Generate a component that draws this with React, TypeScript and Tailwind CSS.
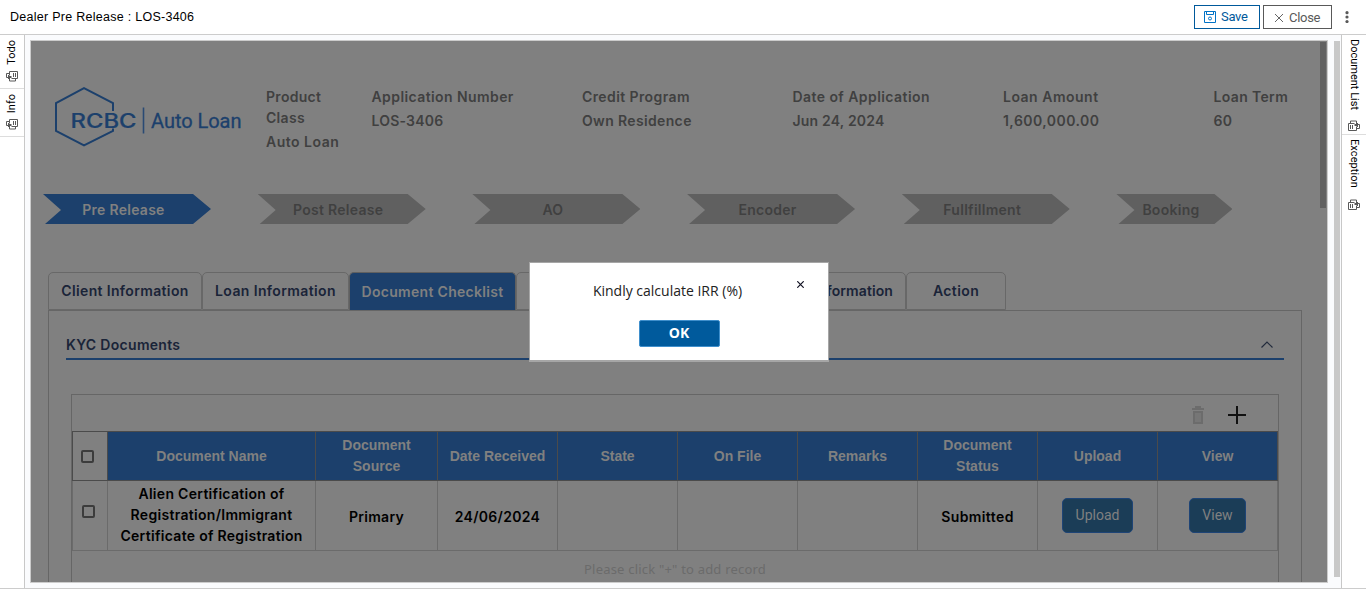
import type { ReactNode } from "react";

const fields = [
  { label: "Product Class", value: "Auto Loan", box: "w-[105.5px]", lt: "w-[73px] tracking-[0.3px]", vt: "tracking-[0.5px]" },
  { label: "Application Number", value: "LOS-3406", box: "w-[210.5px]", lt: "tracking-[0.41px]", vt: "tracking-[0.2px]" },
  { label: "Credit Program", value: "Own Residence", box: "w-[210.5px]", lt: "tracking-[0.4px]", vt: "tracking-[0.35px]" },
  { label: "Date of Application", value: "Jun 24, 2024", box: "w-[210.5px]", lt: "tracking-[0.43px]", vt: "tracking-[0.2px]" },
  { label: "Loan Amount", value: "1,600,000.00", box: "w-[210.5px]", lt: "tracking-[0.5px]", vt: "tracking-[0.45px]" },
  { label: "Loan Term", value: "60", box: "w-[100px]", lt: "tracking-[0.35px]", vt: "tracking-[0.4px]" },
];

const stages = ["Pre Release", "Post Release", "AO", "Encoder", "Fullfillment", "Booking"];

const tabs = [
  { name: "Client Information", box: "w-[154px] tracking-[0.35px]" },
  { name: "Loan Information", box: "w-[147px] tracking-[0.38px]" },
  { name: "Document Checklist", box: "w-[167px] tracking-[0.3px]" },
  { name: "", box: "w-[190px]" },
  { name: "Information", box: "w-[200px] justify-end pr-3 tracking-[0.1px]" },
  { name: "Action", box: "w-[100px] tracking-[0.4px]" },
];

const columns = ["Document Name", "Document Source", "Date Received", "State", "On File", "Remarks", "Document Status", "Upload", "View"];

function RailIcon({ flip = false }: { flip?: boolean }) {
  return (
    <svg width="12" height="11" viewBox="0 0 12 11" fill="none" stroke="#595959" className={flip ? "rotate-180" : ""}>
      <path d="M3.500 4.500v-4h8v7h-6" />
      <path d="M3 2.500H.5v4H2" />
      <path d="M3.500 8v2h6V7.500" />
      <path d="M7.500 2v4M9.500 2v4" />
      <path d="M2 8V4h1v1h2.500v2H4v1z" fill="#595959" stroke="none" />
    </svg>
  );
}

function Logo() {
  return (
    <svg width="190" height="62" viewBox="0 0 190 62" fill="none">
      <path d="M60 25V17L31 2.200 3 17v28L31 59.500 60 45v-2.500" stroke="#1c406c" strokeWidth="2" />
      <text x="17.500" y="41.800" fontFamily="Inter, sans-serif" fontSize="19.500" fontWeight="500" fill="#1c406c" stroke="#1c406c" strokeWidth=".2" textLength="66" lengthAdjust="spacingAndGlyphs">RCBC</text>
      <path d="M90.500 21.500v26" stroke="#2a4a74" strokeWidth="1.600" />
      <text x="98" y="42" fontFamily="Roboto, sans-serif" fontSize="20" fontWeight="400" fill="#1c406c" stroke="#1c406c" strokeWidth=".3" textLength="90.500" lengthAdjust="spacing">Auto Loan</text>
    </svg>
  );
}

function Th({ children }: { children?: ReactNode }) {
  return (
    <div className="flex items-center justify-center border-r border-[#4b4b4b] bg-[#1c406c] px-2 text-center font-['Liberation_Sans',sans-serif] text-[14px] font-bold leading-[21px] text-[#808080]">
      {children}
    </div>
  );
}

function Td({ children }: { children?: ReactNode }) {
  return (
    <div className="flex items-center justify-center border-r border-b border-[#6b6b6b] pt-[3px] text-center text-[14px] font-semibold leading-[21px] tracking-[0.3px] text-black">
      {children}
    </div>
  );
}

function Header() {
  return (
    <header className="flex h-[35px] shrink-0 items-center border-b border-[#ccc] bg-white pr-[17px] pl-[10px] font-['Liberation_Sans',sans-serif]">
      <h1 className="grow pb-px text-[12.500px] leading-4 tracking-[0.27px] text-black">Dealer Pre Release : LOS-3406</h1>
      <button className="flex h-6 w-[66px] items-center border border-[#00599b] pl-[9px] font-[Roboto,sans-serif] text-[13px] leading-4 tracking-[-0.3px] text-[#00599b]">
        <svg width="12" height="12" viewBox="0 0 12 12" fill="none" stroke="#0072c6" className="mr-[5px]">
          <path d="M.5.5h11v11H.5zM2.500.5v3h7v-3" />
          <circle cx="6" cy="7.500" r="1.500" />
        </svg>
        Save
      </button>
      <button className="ml-[3px] flex h-6 w-[69px] items-center border border-[#595959] pt-px pl-[11px] font-[Roboto,sans-serif] text-[13px] leading-4 tracking-[-0.3px] text-[#595959]">
        <svg width="8" height="8" viewBox="0 0 8 8" stroke="#555" strokeWidth=".9" className="mr-[6px]">
          <path d="M0 0l8 8M8 0L0 8" />
        </svg>
        Close
      </button>
      <svg width="4" height="12" viewBox="0 0 4 12" fill="#595959" className="ml-[13px]">
        <circle cx="2" cy="1.700" r="1.600" />
        <circle cx="2" cy="6" r="1.600" />
        <circle cx="2" cy="10.500" r="1.600" />
      </svg>
    </header>
  );
}

function LeftRail() {
  return (
    <nav className="flex w-[25px] shrink-0 flex-col border-r border-[#c8c8c8] bg-white font-[Roboto,sans-serif] text-[11px] leading-3 text-black">
      <div className="flex h-[54px] flex-col items-center justify-between border-b border-[#ddd] pt-[5px] pb-[6px]">
        <span className="rotate-180 [writing-mode:vertical-rl]">Todo</span>
        <RailIcon />
      </div>
      <div className="flex h-12 flex-col items-center justify-between border-b border-[#ddd] pt-[5px] pb-[6px]">
        <span className="rotate-180 [writing-mode:vertical-rl]">Info</span>
        <RailIcon />
      </div>
    </nav>
  );
}

function RightRail() {
  return (
    <nav className="flex w-[25px] shrink-0 flex-col border-l border-[#c8c8c8] bg-white font-[Roboto,sans-serif] text-[11px] leading-3 text-black">
      <div className="flex h-[100px] flex-col items-center justify-between border-b border-[#ddd] pt-1 pb-[3px]">
        <span className="[writing-mode:vertical-rl]">Document List</span>
        <RailIcon flip />
      </div>
      <div className="flex h-[75px] flex-col items-center justify-between pt-[4px]">
        <span className="tracking-[0.1px] [writing-mode:vertical-rl]">Exception</span>
        <RailIcon flip />
      </div>
    </nav>
  );
}

function Summary() {
  return (
    <section className="flex h-[153px] pt-[45px] pl-[22px]">
      <Logo />
      <dl className="flex pl-[23px] text-[14px] font-semibold leading-[21px] text-[#404040]">
        {fields.map((f) => (
          <div key={f.label} className={f.box + " shrink-0"}>
            <dt className={f.lt}>{f.label}</dt>
            <dd className={"mt-[3px] " + f.vt}>{f.value}</dd>
          </div>
        ))}
      </dl>
    </section>
  );
}

function Stages() {
  return (
    <ol className="flex h-[30px] shrink-0 pl-[12px] text-[14px] font-semibold tracking-[0.27px]">
      {stages.map((s, i) => (
        <li
          key={s}
          className={
            "mr-[46.700px] flex h-[30px] shrink-0 items-center justify-center pr-[7px] [clip-path:polygon(0_0,calc(100%_-_18px)_0,100%_50%,calc(100%_-_18px)_100%,2px_100%,18px_53%)] " +
            (i === 0 ? "bg-[#1c406c] text-[#808080] " : "bg-[#606060] text-[#404040] ") +
            (i === 5 ? "w-[116px]" : "w-[168px]")
          }
        >
          {s}
        </li>
      ))}
    </ol>
  );
}

function Tabs() {
  return (
    <div className="mt-12 ml-[17px] flex h-[38px] shrink-0 text-[14px] font-semibold text-[#1a2438]">
      {tabs.map((t, i) => (
        <button
          key={i}
          className={
            t.box +
            " flex shrink-0 items-center justify-center rounded-t-[5px] border pb-px whitespace-nowrap " +
            (i === 2 ? "border-[#606060] border-b-0 bg-[#1c406c] text-[#808080]" : "border-[#686868]")
          }
        >
          {t.name}
        </button>
      ))}
    </div>
  );
}

function DocumentGrid() {
  return (
    <div className="ml-[22px] mt-[34px] h-[240px] w-[1208px] shrink-0 border border-[#666]">
      <div className="flex h-9 items-center justify-end pt-1 pr-8">
        <svg width="12" height="18" viewBox="0 0 12 18" className="mr-6">
          <path fill="#6c6c6c" fillRule="evenodd" d="M3 0h6v2h3v2H0V2h3zM1 5h10v13H1zM3.500 7v9h1V7zM5.500 7v9h1V7zM7.500 7v9h1V7z" />
        </svg>
        <svg width="18" height="18" viewBox="0 0 18 18" stroke="#111" strokeWidth="2">
          <path d="M9 0v18M0 9h18" />
        </svg>
      </div>
      <div className="grid h-[50px] grid-cols-[36px_208px_122px_120px_120px_120px_120px_120px_120px_120px] border-y border-[#4b4b4b]">
        <div className="flex items-center border-x border-[#4b4b4b] pl-2">
          <span className="size-[13px] rounded-[2px] border-2 border-[#3c3c3c]" />
        </div>
        {columns.map((c) => (
          <Th key={c}>{c}</Th>
        ))}
      </div>
      <div className="grid h-[70px] grid-cols-[36px_208px_122px_120px_120px_120px_120px_120px_120px_120px]">
        <div className="flex items-center border-x border-b border-[#6b6b6b] pb-[9px] pl-[9px]">
          <span className="size-[13px] rounded-[2px] border-2 border-[#3c3c3c]" />
        </div>
        <Td>
          <span className="-mt-[5px]">
            Alien Certification of
            <br />
            Registration/Immigrant
            <br />
            Certificate of Registration
          </span>
        </Td>
        <Td>
          <span className="-mt-[2px]">Primary</span>
        </Td>
        <Td>
          <span className="-mt-[2px]">24/06/2024</span>
        </Td>
        <Td />
        <Td />
        <Td />
        <Td>
          <span className="-mt-[2px] tracking-[0.4px]">Submitted</span>
        </Td>
        <Td>
          <button className="mb-[4px] h-[35px] w-[71px] rounded-[5px] border border-[#1e4476] bg-[#1b3d57] font-[Roboto,sans-serif] text-[14px] font-normal tracking-normal text-[#808080]">Upload</button>
        </Td>
        <Td>
          <button className="mb-[4px] h-[35px] w-[57px] rounded-[5px] border border-[#1e4476] bg-[#1b3d57] font-[Roboto,sans-serif] text-[14px] font-normal tracking-normal text-[#808080]">View</button>
        </Td>
      </div>
      <p className="pt-[8px] text-center font-['Noto_Sans',sans-serif] text-[13px] leading-5 tracking-[0.2px] text-[#6b6b6b]">Please click "+" to add record</p>
    </div>
  );
}

function Dialog() {
  return (
    <div role="dialog" className="absolute top-[221px] left-[498px] flex h-[100px] w-[300px] flex-col items-center border border-b-2 border-[#a6a6a6] bg-white font-['Open_Sans',sans-serif] text-[14px]">
      <p className="mt-[18px] pr-[23px] leading-5 text-[#222]">Kindly calculate IRR (%)</p>
      <button className="mt-[19px] h-[27px] w-[81px] rounded-[2px] border border-[#3f8fcc] bg-[#005a9c] pb-[2px] text-[14px] font-bold leading-[23px] text-white">OK</button>
      <svg width="7" height="7" viewBox="0 0 7 7" stroke="#112" strokeWidth="1.200" className="absolute top-[18px] right-[24px]">
        <path d="M.3.3l6.400 6.400M6.700.3L.3 6.700" />
      </svg>
    </div>
  );
}

export default function App() {
  return (
    <div className="flex h-[589px] w-[1366px] flex-col overflow-hidden border-b border-[#ccc] bg-white font-[Inter,sans-serif]">
      <Header />
      <div className="flex min-h-0 grow">
        <LeftRail />
        <main className="flex min-w-0 grow bg-[#fafbfd] pt-[5px] pl-[5px]">
          <div className="relative h-[543px] w-[1298px] shrink-0 border border-[#ccc]">
            <div className="flex h-full bg-[#808080]">
              <div className="flex h-full w-[1289px] shrink-0 flex-col overflow-hidden">
                <Summary />
                <Stages />
                <Tabs />
                <section className="ml-[17px] flex h-[272px] w-[1254px] shrink-0 flex-col overflow-hidden border border-b-0 border-[#666]">
                  <div className="ml-[17px] mt-[22px] flex h-[27px] w-[1218px] shrink-0 items-start justify-between border-b-2 border-[#1c406c] pr-[11px]">
                    <h2 className="text-[14px] font-semibold leading-6 tracking-[0.3px] text-[#1a2438]">KYC Documents</h2>
                    <svg width="12" height="7" viewBox="0 0 12 7" fill="none" stroke="#222b3c" strokeWidth="1.200" className="mt-2">
                      <path d="M.5 6.500L6 1l5.500 5.500" />
                    </svg>
                  </div>
                  <DocumentGrid />
                </section>
              </div>
              <div className="mt-px h-[166px] w-[6px] bg-[#616161]" />
            </div>
            <Dialog />
          </div>
          <div className="ml-[6px] mt-px h-[536px] w-[6px] shrink-0 bg-[#c8c8c8]" />
        </main>
        <RightRail />
      </div>
    </div>
  );
}
